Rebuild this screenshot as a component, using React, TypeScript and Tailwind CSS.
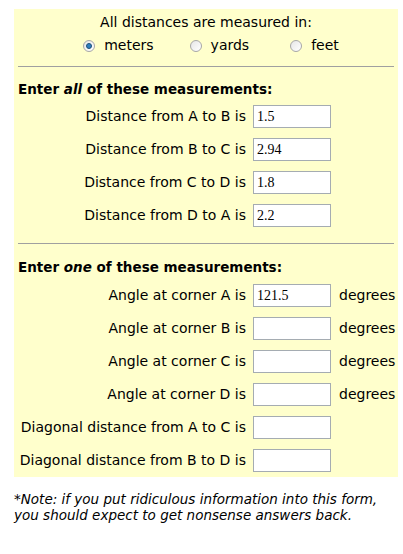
import React from 'react'

const font = { fontFamily: '"DejaVu Sans", Verdana, sans-serif' }

const Radio: React.FC<{ label: string; checked?: boolean; className?: string }> = ({ label, checked, className }) => (
  <label className={`flex items-center gap-[9px] ${className ?? ''}`}>
    <span className="relative flex h-[12px] w-[12px] items-center justify-center rounded-full border border-[#a7a7a7] bg-gradient-to-br from-[#e6e6e6] to-[#ffffff]">
      {checked && <span className="h-[6px] w-[6px] rounded-full border border-[#1d4f7a] bg-[#2f7fbf]" />}
    </span>
    <span>{label}</span>
  </label>
)

const Field: React.FC<{ value?: string }> = ({ value }) => (
  <input
    defaultValue={value}
    className="h-[23px] w-[78px] border border-[#a5acb2] bg-white px-[3px] text-[14px] text-black outline-none"
    style={{ fontFamily: '"Liberation Serif", "Times New Roman", serif' }}
  />
)

type Row = { label: string; value?: string; unit?: string }

const allRows: Row[] = [
  { label: 'Distance from A to B is', value: '1.5' },
  { label: 'Distance from B to C is', value: '2.94' },
  { label: 'Distance from C to D is', value: '1.8' },
  { label: 'Distance from D to A is', value: '2.2' },
]

const oneRows: Row[] = [
  { label: 'Angle at corner A is', value: '121.5', unit: 'degrees' },
  { label: 'Angle at corner B is', unit: 'degrees' },
  { label: 'Angle at corner C is', unit: 'degrees' },
  { label: 'Angle at corner D is', unit: 'degrees' },
  { label: 'Diagonal distance from A to C is' },
  { label: 'Diagonal distance from B to D is' },
]

const Rows: React.FC<{ rows: Row[] }> = ({ rows }) => (
  <div className="grid grid-cols-[228px_78px_1fr] items-center gap-x-[7px] gap-y-[10px]">
    {rows.map((r) => (
      <React.Fragment key={r.label}>
        <span className="whitespace-nowrap text-right leading-[17px]">{r.label}</span>
        <Field value={r.value} />
        <span className="pl-[1px] leading-[17px]">{r.unit ?? ''}</span>
      </React.Fragment>
    ))}
  </div>
)

export default function App() {
  return (
    <div className="min-h-[554px] bg-white pt-[9px] text-[14px] text-black" style={font}>
      <div className="mx-[14px] w-[384px] bg-[#ffffcc] px-[4px] pb-[5px] pt-[5px]">
        <div className="text-center leading-[17px]">All distances are measured in:</div>
        <div className="mt-[6px] flex justify-center pl-[10px] leading-[17px]">
          <Radio label="meters" checked />
          <Radio label="yards" className="ml-[36px]" />
          <Radio label="feet" className="ml-[41px]" />
        </div>
        <div className="mt-[12px] h-[1px] bg-[#a0a0a0]" />
        <div className="mt-[14px] text-[13.5px] font-bold leading-[17px]">
          Enter <i>all</i> of these measurements:
        </div>
        <div className="mt-[7px]">
          <Rows rows={allRows} />
        </div>
        <div className="mt-[16px] h-[1px] bg-[#a0a0a0]" />
        <div className="mt-[15px] text-[13.5px] font-bold leading-[17px]">
          Enter <i>one</i> of these measurements:
        </div>
        <div className="mt-[8px]">
          <Rows rows={oneRows} />
        </div>
      </div>
      <div className="mx-[14px] mt-[14px] text-[13.5px] italic leading-[16px]">
        *Note: if you put ridiculous information into this form,
        <br />
        you should expect to get nonsense answers back.
      </div>
    </div>
  )
}
